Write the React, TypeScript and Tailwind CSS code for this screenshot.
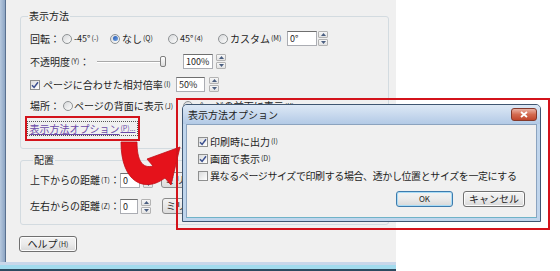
import React from "react";

function Mn({ children }: { children: React.ReactNode }) {
  return <span className="ml-[1px] text-[7px] leading-none">{children}</span>;
}

function Radio({ on = false }: { on?: boolean }) {
  return (
    <span className="flex h-[10px] w-[10px] shrink-0 items-center justify-center rounded-full border border-[#8f9395] bg-linear-to-br from-[#d6d8da] to-[#fdfdfd]">
      {on && <span className="h-[5px] w-[5px] rounded-full bg-linear-to-br from-[#1f56b3] to-[#78a7e3]" />}
    </span>
  );
}

function Check({ on = false }: { on?: boolean }) {
  return (
    <span className="flex h-[10px] w-[10px] shrink-0 items-center justify-center border border-[#8e8f8f] bg-linear-to-br from-[#dadbdc] to-white">
      {on && (
        <svg width="8" height="8" viewBox="0 0 8 8">
          <path d="M1 4.2 L3.1 6.4 L7 1.3" fill="none" stroke="#3b4f8f" strokeWidth="1.5" />
        </svg>
      )}
    </span>
  );
}

function Field({ value, w }: { value: string; w: string }) {
  return (
    <span className={`flex h-[15px] shrink-0 items-center border border-[#abadb3] border-t-[#6f6f6f] bg-white pl-[2px] text-[9px] leading-none ${w}`}>
      {value}
    </span>
  );
}

function Spin() {
  return (
    <span className="flex h-[15px] w-[10px] shrink-0 flex-col gap-[1px]">
      <span className="flex flex-1 items-center justify-center rounded-[1px] border border-[#b3b3b3] bg-linear-to-b from-[#f7f7f7] to-[#e3e3e3]">
        <svg width="5" height="3" viewBox="0 0 5 3">
          <path d="M0 3 L2.5 0 L5 3Z" fill="#4a5e80" />
        </svg>
      </span>
      <span className="flex flex-1 items-center justify-center rounded-[1px] border border-[#b3b3b3] bg-linear-to-b from-[#f7f7f7] to-[#e3e3e3]">
        <svg width="5" height="3" viewBox="0 0 5 3">
          <path d="M0 0 L2.5 3 L5 0Z" fill="#4a5e80" />
        </svg>
      </span>
    </span>
  );
}

function Btn({ children, w, def = false }: { children: React.ReactNode; w: string; def?: boolean }) {
  return (
    <span
      className={`flex h-[16px] shrink-0 items-center justify-center rounded-[3px] border bg-linear-to-b from-[#f3f3f3] via-[#ebebeb] to-[#d8d8d8] text-[10px] leading-none ${
        def ? "border-[#3d7bad] shadow-[inset_0_0_0_1px_#a9dcf6]" : "border-[#707070] shadow-[inset_0_0_0_1px_#fcfcfc]"
      } ${w}`}
    >
      {children}
    </span>
  );
}

function Arrow() {
  return (
    <svg className="absolute left-[112px] top-[136px]" width="72" height="58" viewBox="0 0 72 58">
      <path
        d="M9 6 L25 6 C25 24 30 33 41 30 L35 23 L68 11 L59 49 L53 42 C33 57 9 47 9 6 Z"
        fill="#e5121b"
        stroke="#c10d15"
        strokeWidth="0.8"
      />
    </svg>
  );
}

export default function App() {
  return (
    <div className="relative h-[271px] w-[560px] overflow-hidden whitespace-nowrap bg-white font-['Noto_Sans_CJK_JP','Noto_Sans',sans-serif] text-[10px] leading-none text-[#1e1e1e]">
      {/* background window */}
      <div className="flex h-full w-[396px] flex-col">
        <div className="flex flex-1">
          <div className="w-[6px] border-r border-[#5a7190] bg-linear-to-r from-[#b6c8de] to-[#8ea6c4]" />
          <div className="flex flex-1 flex-col bg-[#f0f0f0]">
            <fieldset className="ml-[14px] mt-[10px] w-[369px] rounded-[3px] border border-[#d3dbe0] pb-[7px] pl-[4px] pt-[5px]">
              <legend className="ml-[3px] px-[1px] text-[10px] leading-[12px]">表示方法</legend>
              <div className="flex h-[23px] items-center pl-[5px]">
                <span className="w-[32px]">回転：</span>
                <span className="flex w-[48px] items-center">
                  <Radio />
                  <span className="ml-[2px] text-[9px]">-45°</span>
                  <Mn>(-)</Mn>
                </span>
                <span className="flex w-[58px] items-center">
                  <Radio on />
                  <span className="ml-[2px]">なし</span>
                  <Mn>(Q)</Mn>
                </span>
                <span className="flex w-[50px] items-center">
                  <Radio />
                  <span className="ml-[2px] text-[9px]">45°</span>
                  <Mn>(4)</Mn>
                </span>
                <span className="flex w-[69px] items-center">
                  <Radio />
                  <span className="ml-[2px]">カスタム</span>
                  <Mn>(M)</Mn>
                </span>
                <Field value="0°" w="w-[30px]" />
                <span className="ml-[1px]">
                  <Spin />
                </span>
              </div>
              <div className="flex h-[23px] items-center pl-[5px]">
                <span className="flex w-[67px] items-center">
                  不透明度<Mn>(Y)</Mn>：
                </span>
                <span className="flex w-[71px] items-center">
                  <span className="h-[2px] flex-1 border-t border-b border-t-[#a9a9a9] border-b-white" />
                  <span className="mr-[2px] h-[11px] w-[6px] rounded-[2px] border border-[#7f7f7f] bg-linear-to-b from-white to-[#dcdcdc]" />
                </span>
                <span className="ml-[15px]">
                  <Field value="100%" w="w-[30px]" />
                </span>
                <span className="ml-[3px]">
                  <Spin />
                </span>
              </div>
              <div className="flex h-[23px] items-center pl-[5px]">
                <Check on />
                <span className="ml-[3px] flex w-[133px] items-center">
                  ページに合わせた相対倍率<Mn>(I)</Mn>
                </span>
                <Field value="50%" w="w-[29px]" />
                <span className="ml-[4px]">
                  <Spin />
                </span>
              </div>
              <div className="flex h-[20px] items-center pl-[5px]">
                <span className="w-[33px]">場所：</span>
                <span className="flex w-[120px] items-center">
                  <Radio />
                  <span className="ml-[1px]">ページの背面に表示</span>
                  <Mn>(J)</Mn>
                </span>
                <span className="flex items-center">
                  <Radio />
                  <span className="ml-[1px]">ページの前面に表示</span>
                  <Mn>(K)</Mn>
                </span>
              </div>
              <div className="flex h-[25px] w-[115px] items-center justify-center border-2 border-[#d3131b]">
                <span className="flex h-[15px] items-center border border-dotted border-[#555] px-[1px] text-[#6b4aa8] underline">
                  表示方法オプション<Mn>(P)...</Mn>
                </span>
              </div>
            </fieldset>

            <fieldset className="ml-[14px] mt-[5px] w-[369px] rounded-[3px] border border-[#d3dbe0] pb-[5px] pl-[9px] pt-[1px]">
              <legend className="ml-[3px] px-[1px] text-[10px] leading-[12px]">配置</legend>
              <div className="flex h-[26px] items-center">
                <span className="flex w-[90px] shrink-0 items-center justify-end">
                  上下からの距離<Mn>(T)</Mn>：
                </span>
                <Field value="0" w="w-[20px]" />
                <span className="ml-[3px]">
                  <Spin />
                </span>
                <span className="ml-[8px] flex h-[16px] w-[80px] shrink-0 items-center rounded-[3px] border border-[#8a8a8a] bg-linear-to-b from-[#f3f3f3] to-[#dcdcdc] pl-[3px]">
                  ミリメートル
                </span>
              </div>
              <div className="flex h-[26px] items-center">
                <span className="flex w-[90px] shrink-0 items-center justify-end">
                  左右からの距離<Mn>(Z)</Mn>：
                </span>
                <Field value="0" w="w-[18px]" />
                <span className="ml-[3px]">
                  <Spin />
                </span>
                <span className="ml-[11px] flex h-[16px] w-[80px] shrink-0 items-center rounded-[3px] border border-[#8a8a8a] bg-linear-to-b from-[#f3f3f3] to-[#dcdcdc] pl-[3px]">
                  ミリメートル
                </span>
              </div>
            </fieldset>

            <div className="ml-[13px] mt-[11px]">
              <Btn w="w-[58px]">
                ヘルプ<Mn>(H)</Mn>
              </Btn>
            </div>
          </div>
        </div>
        <div className="flex h-[9px] flex-col">
          <div className="h-[3px] bg-[#c9d7ea]" />
          <div className="h-[4px] bg-[#a2dbee]" />
          <div className="h-[2px] bg-[#2c4a60]" />
        </div>
      </div>

      <Arrow />

      {/* option dialog, framed in red */}
      <div className="absolute left-[176px] top-[98px] h-[132px] w-[374px] border-2 border-[#d3131b] pl-[4px] pt-[4px]">
        <div className="flex h-[118px] w-[359px] flex-col overflow-hidden rounded-t-[5px] border border-[#3f5671] bg-[#c0d5ec]">
          <div className="flex h-[19px] shrink-0 items-center justify-between bg-linear-to-b from-[#dde8f5] to-[#b3cae6] pl-[5px] pr-[3px]">
            <span className="text-[10px]">表示方法オプション</span>
            <span className="flex h-[13px] w-[26px] items-center justify-center rounded-[3px] border border-[#83392b] bg-linear-to-b from-[#eab2a4] via-[#d36a4f] to-[#c0452b]">
              <svg width="8" height="7" viewBox="0 0 8 7">
                <path d="M1 1 L7 6 M7 1 L1 6" stroke="white" strokeWidth="1.8" />
              </svg>
            </span>
          </div>
          <div className="mx-[3px] mb-[3px] flex flex-1 flex-col border border-[#8ba3bf] border-b-[#6fb3c8] bg-[#f0f0f0] pl-[11px] pr-[11px] pt-[8px]">
            <div className="flex h-[17px] items-center">
              <Check on />
              <span className="ml-[2px] flex items-center">
                印刷時に出力<Mn>(I)</Mn>
              </span>
            </div>
            <div className="flex h-[17px] items-center">
              <Check on />
              <span className="ml-[2px] flex items-center">
                画面で表示<Mn>(D)</Mn>
              </span>
            </div>
            <div className="flex h-[17px] items-center">
              <Check />
              <span className="ml-[2px] tracking-[-0.4px]">異なるページサイズで印刷する場合、透かし位置とサイズを一定にする</span>
            </div>
            <div className="mt-[7px] flex justify-end gap-[10px]">
              <Btn w="w-[57px]" def>
                <span className="text-[8px]">OK</span>
              </Btn>
              <Btn w="w-[62px]">キャンセル</Btn>
            </div>
          </div>
        </div>
      </div>
    </div>
  );
}
